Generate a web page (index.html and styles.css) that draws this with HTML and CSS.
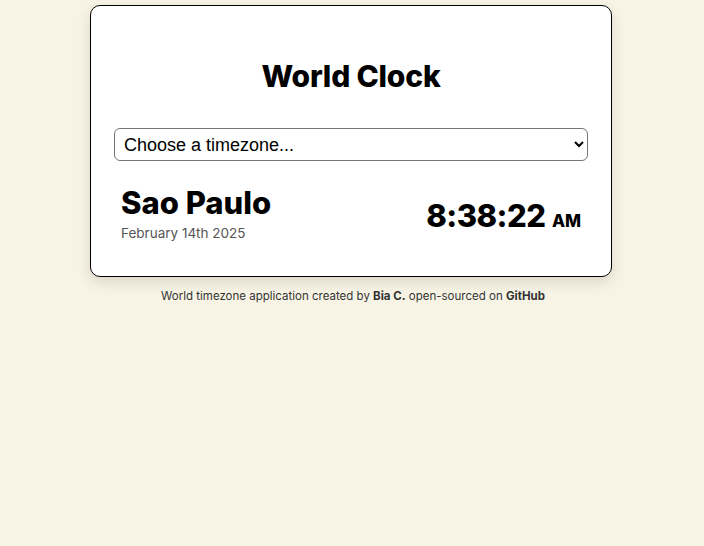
FILE: index.html
```html
<!DOCTYPE html>
<html lang="en">
<head>
<meta charset="utf-8">
<title>World Clock</title>
<link rel="stylesheet" href="styles.css">
</head>
<body>
<main class="container">
  <h1 class="title">World Clock</h1>
  <select class="picker">
    <option>Choose a timezone...</option>
  </select>
  <div class="cities">
    <div class="city">
      <div class="city-info">
        <h2 class="city-name">Sao Paulo</h2>
        <div class="city-date">February 14th 2025</div>
      </div>
      <div class="city-time">8:38:22 <small class="ampm">AM</small></div>
    </div>
  </div>
</main>
<footer class="footer">World timezone application created by <a href="#">Bia C.</a> open-sourced on <a href="#">GitHub</a></footer>
</body>
</html>
```
FILE: styles.css
```css
* { box-sizing: border-box; }
html, body { margin: 0; padding: 0; }
body {
  background: #f7f4e5;
  font-family: "Inter", "Noto Sans", sans-serif;
  color: #000;
}
.container {
  width: 522px;
  margin: 5px 0 0 calc(50% - 262px);
  background: #fff;
  border: 1px solid #000;
  border-radius: 10px;
  box-shadow: 0 5px 14px rgba(0, 0, 0, 0.12);
  padding: 55px 23px 35px;
}
.title {
  margin: 0 0 37px;
  text-align: center;
  font-size: 30px;
  font-weight: 800;
  line-height: 1;
  letter-spacing: -0.2px;
}
.picker {
  display: block;
  width: 100%;
  height: 33px;
  font-family: "Liberation Sans", Arial, sans-serif;
  font-size: 18px;
  padding: 0 5px;
  border: 1px solid #767676;
  border-radius: 6px;
  background: #fff;
  color: #000;
}
.cities { margin-top: 25px; }
.city {
  display: flex;
  align-items: center;
  justify-content: space-between;
  padding: 0 7px;
}
.city-name {
  margin: 0;
  font-size: 31px;
  font-weight: 800;
  line-height: 1.1;
}
.city-date {
  margin-top: 5px;
  font-size: 13.5px;
  color: #555;
}
.city-time {
  font-size: 31px;
  font-weight: 800;
  line-height: 1;
  letter-spacing: -0.5px;
  margin-top: 4px;
}
.ampm {
  font-size: 17px;
  font-weight: 800;
  letter-spacing: 0;
}
.footer {
  margin-top: 12px;
  text-align: center;
  font-size: 11.5px;
  color: #333;
  padding-left: 2px;
}
.footer a {
  color: #333;
  font-weight: 700;
  text-decoration: none;
}
```
